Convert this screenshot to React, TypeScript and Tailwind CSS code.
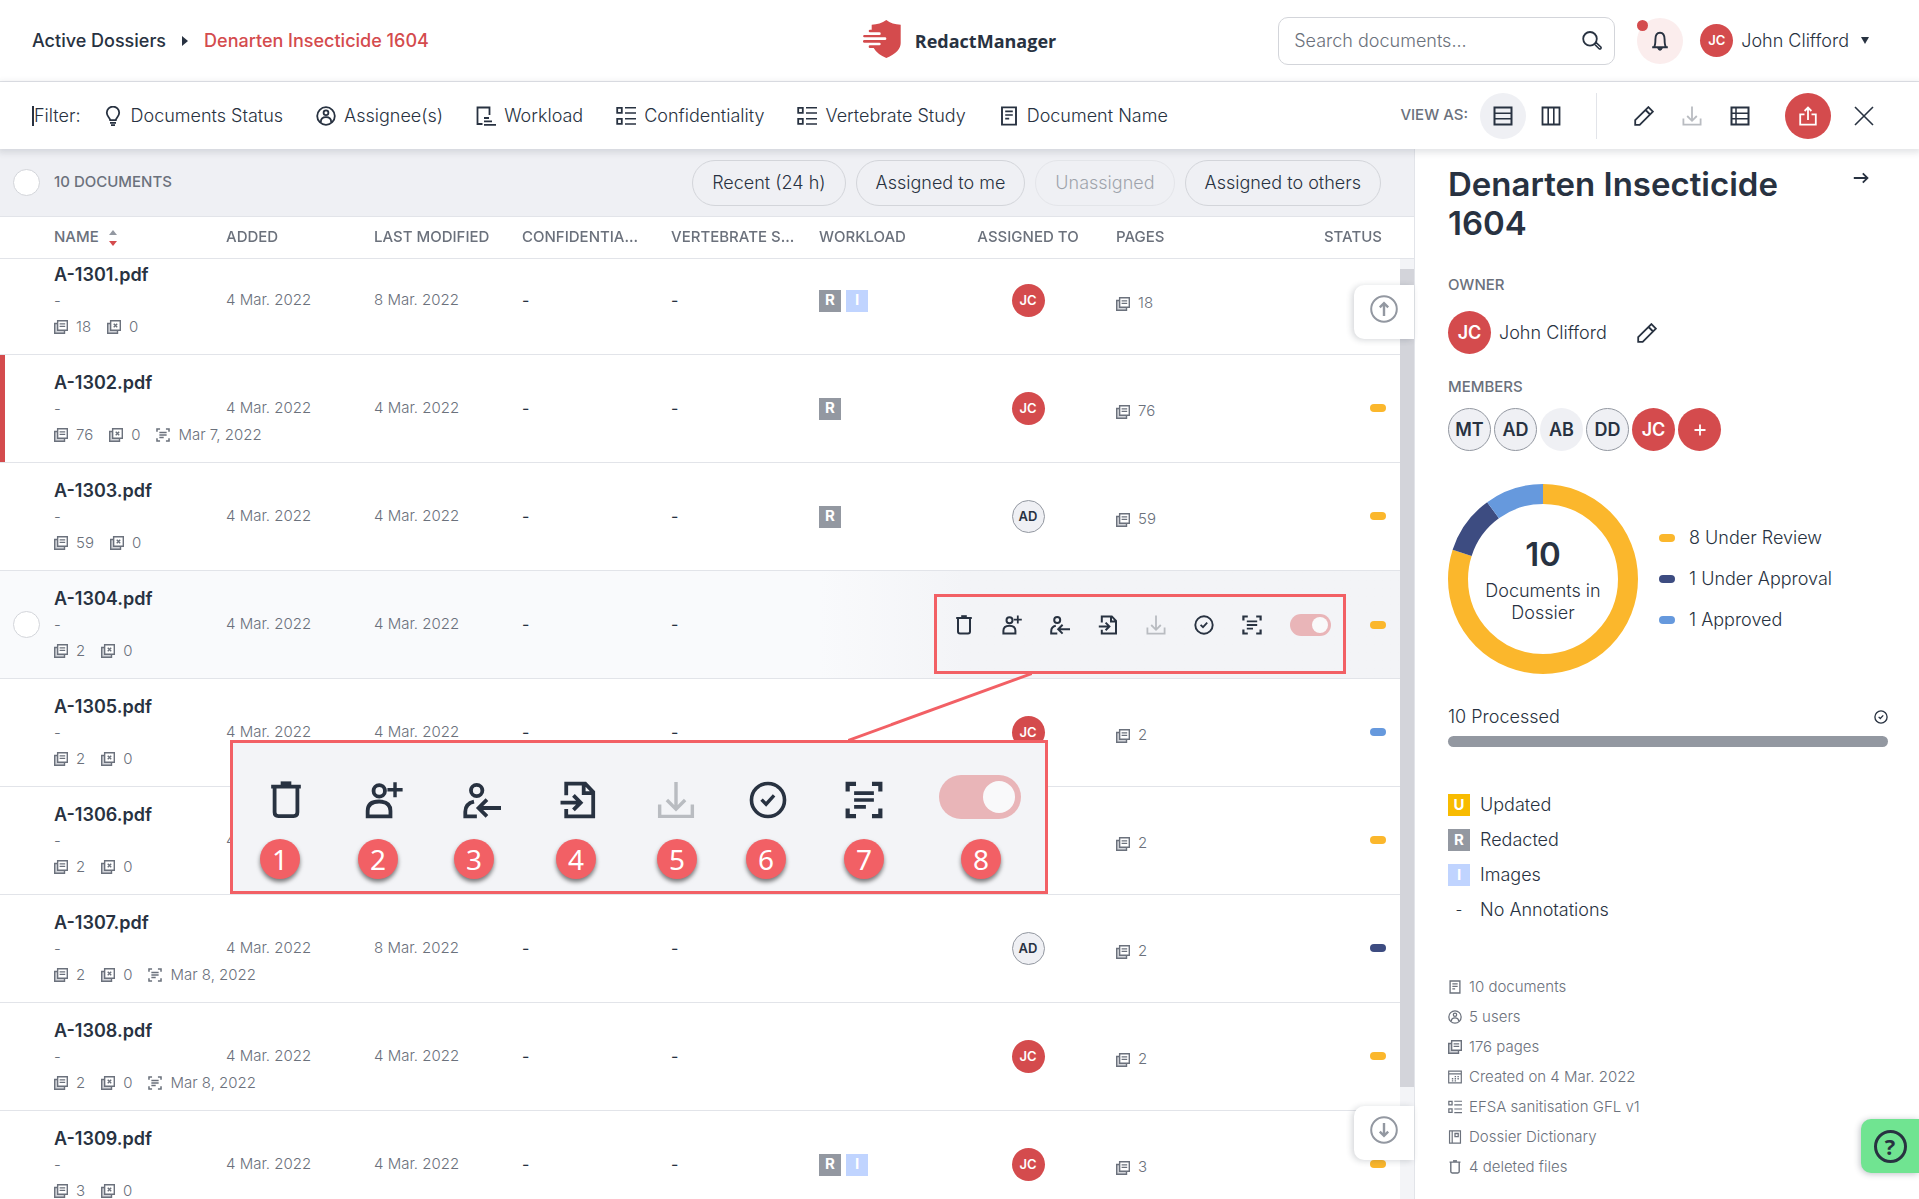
import { useLayoutEffect, useRef } from "react";
import type { ReactNode } from "react";
import { clsx } from "clsx";

type IconProps = { className?: string };

const Svg = ({ className, children }: { className?: string; children: ReactNode }) => (
  <svg
    viewBox="0 0 20 20"
    fill="none"
    stroke="currentColor"
    strokeWidth="2"
    aria-hidden="true"
    className={clsx("shrink-0", className ?? "size-5")}
  >
    {children}
  </svg>
);

const TrashIcon = ({ className }: IconProps) => (
  <Svg className={className}>
    <path d="M2.2 3h15.6M4 3v13.5q0 2 2 2h8q2 0 2-2V3" />
    <path d="M7.2 1.4h5.6" strokeWidth="2.4" />
  </Svg>
);

const AssignIcon = ({ className }: IconProps) => (
  <Svg className={className}>
    <circle cx="7.5" cy="5.2" r="3" />
    <path d="M1.4 18.6v-2.8q0-5 6-5t6 5v2.8z" />
    <path d="M15.8.6v8M11.8 4.6h8" strokeWidth="1.8" />
  </Svg>
);

const UnassignIcon = ({ className }: IconProps) => (
  <Svg className={className}>
    <circle cx="7.2" cy="5" r="3" />
    <path d="M7.3 18.6H1.2v-2.4q0-4.4 4.6-5.4M8.5 14.2H20M12.6 9.8l-4.4 4.4 4.4 4.4" />
  </Svg>
);

const ImportIcon = ({ className }: IconProps) => (
  <Svg className={className}>
    <path d="M3.8 7.5V1.4h10l4.2 4.4v12.8H3.8v-3.8M13 1.4v5h5" />
    <path d="M.8 11.4h10M7.6 7.6l3.8 3.8-3.8 3.8" />
  </Svg>
);

const DownloadIcon = ({ className }: IconProps) => (
  <Svg className={className}>
    <path d="M10 .5v14M5.2 10l4.8 4.8 4.8-4.8M1.4 12.4v6.2h17.2v-6.2" strokeWidth="1.8" />
  </Svg>
);

const CheckCircleIcon = ({ className }: IconProps) => (
  <Svg className={className}>
    <circle cx="10" cy="10" r="8.7" strokeWidth="1.9" />
    <path d="M6.6 9.8l2.4 2.4 4.2-4.6" strokeWidth="1.8" />
  </Svg>
);

const ScanIcon = ({ className }: IconProps) => (
  <Svg className={className}>
    <path d="M1.4 5.5v-4h4.4M14.2 1.5h4.4v4M18.6 14.5v4h-4.4M5.8 18.5H1.4v-4" strokeWidth="2.2" />
    <path d="M4.8 6.4h10.4M4.8 10h10.4M4.8 13.6h6.2" strokeWidth="1.9" />
  </Svg>
);

const BulbIcon = ({ className }: IconProps) => (
  <Svg className={className}>
    <path
      d="M7.2 14.2C7.2 12 3.8 10.4 3.8 6.8a6.2 6.2 0 0 1 12.4 0c0 3.6-3.4 5.2-3.4 7.4zM7 16.8h6M8 19.2h4"
      strokeWidth="1.8"
    />
  </Svg>
);

const UserCircleIcon = ({ className }: IconProps) => (
  <Svg className={className}>
    <circle cx="10" cy="10" r="8.8" strokeWidth="1.8" />
    <circle cx="10" cy="6.8" r="2.4" strokeWidth="1.8" />
    <path d="M4.8 16.2q0-5 5.2-5t5.2 5" strokeWidth="1.8" />
  </Svg>
);

const WorkloadIcon = ({ className }: IconProps) => (
  <Svg className={className}>
    <path d="M6.5 18H1.5V1.5h12V9M8 12h5M8 15.4h8M8 18.8h12" strokeWidth="1.8" />
  </Svg>
);

const ListIcon = ({ className }: IconProps) => (
  <Svg className={className}>
    <path d="M1.2 1.8h4.6v5H1.2zM1.2 12.8h4.6v5H1.2z" strokeWidth="1.8" />
    <path d="M9 1.8h11M9 7h11M9 12.8h11M9 18h11" strokeWidth="1.6" />
  </Svg>
);

const DocIcon = ({ className }: IconProps) => (
  <Svg className={className}>
    <path d="M3 1.4h14v17.2H3z" strokeWidth="1.9" />
    <path d="M6.2 5.4h7.6M6.2 9h7.6M6.2 12.6h4" strokeWidth="1.7" />
  </Svg>
);

const RowsIcon = ({ className }: IconProps) => (
  <Svg className={className}>
    <path d="M1.5 1.5h17v17h-17z" />
    <path d="M2 7.2h16M2 12.8h16" strokeWidth="1.5" />
  </Svg>
);

const ColumnsIcon = ({ className }: IconProps) => (
  <Svg className={className}>
    <path d="M1.5 1.5h17v17h-17z" strokeWidth="1.8" />
    <path d="M7.2 2v16M12.8 2v16" strokeWidth="1.6" />
  </Svg>
);

const ReportIcon = ({ className }: IconProps) => (
  <Svg className={className}>
    <path d="M1.5 1.5h17v17h-17z" />
    <path d="M6 2v16M2 7.2h16M2 12.8h16" strokeWidth="1.5" />
  </Svg>
);

const PencilIcon = ({ className }: IconProps) => (
  <Svg className={className}>
    <path d="M1.2 18.8v-4.6L14.4 1.1l4.5 4.5L5.7 18.8zM11.6 4l4.5 4.5" strokeWidth="1.8" />
  </Svg>
);

const ShareIcon = ({ className }: IconProps) => (
  <Svg className={className}>
    <path d="M6.5 8.3H2.2v10.4h15.6V8.3h-4.3M10 14V1.6M6.6 5L10 1.6 13.4 5" strokeWidth="1.8" />
  </Svg>
);

const CloseIcon = ({ className }: IconProps) => (
  <Svg className={className}>
    <path d="M1 1l18 18M19 1L1 19" strokeWidth="1.6" />
  </Svg>
);

const SearchIcon = ({ className }: IconProps) => (
  <Svg className={className}>
    <circle cx="8" cy="7.8" r="6.8" strokeWidth="1.8" />
    <path d="M12.6 13.2l1.6-1.6 4.6 4.4q.6.8-.1 1.6-.8.8-1.6.1z" strokeWidth="1.6" />
  </Svg>
);

const BellIcon = ({ className }: IconProps) => (
  <Svg className={className}>
    <path d="M2.2 16.2h15.6M4.2 16q1.2-2 1.2-7.4 0-6.8 4.6-6.8t4.6 6.8q0 5.4 1.2 7.4" strokeWidth="1.9" />
    <path d="M7.8 17.2q.4 2 2.2 2t2.2-2z" fill="currentColor" strokeWidth="1" />
  </Svg>
);

const PagesIcon = ({ className }: IconProps) => (
  <Svg className={className}>
    <path d="M1 5h14v14H1z" fill="#d3d5da" />
    <path d="M5.2 1H19v13.6H5.2z" fill="#fff" />
    <path d="M8 5.4h8M8 9.2h8" strokeWidth="1.7" />
  </Svg>
);

const ExcludedIcon = ({ className }: IconProps) => (
  <Svg className={className}>
    <path d="M1 5h14v14H1z" fill="#d3d5da" />
    <path d="M5.2 1H19v13.6H5.2z" fill="#fff" />
    <path d="M9.6 5.4l5 5M14.6 5.4l-5 5" />
  </Svg>
);

const CalendarIcon = ({ className }: IconProps) => (
  <Svg className={className}>
    <path d="M1 1.5h18v17H1zM1 5.5h18" strokeWidth="1.7" />
    <path d="M9.5 9.5h2M13.5 9.5h2M5.5 12.5h2M9.5 12.5h2M13.5 12.5h2M5.5 15.5h2M9.5 15.5h2" strokeWidth="1.8" />
  </Svg>
);

const BookIcon = ({ className }: IconProps) => (
  <Svg className={className}>
    <path d="M2.2 1.2h15.6v17.6H2.2zM6 1.5v17" strokeWidth="1.7" />
    <path d="M10 5h4.6v4.6H10z" strokeWidth="1.8" />
  </Svg>
);

const ArrowRightIcon = ({ className }: IconProps) => (
  <Svg className={className}>
    <path d="M2 10h15M12 4.8l5.2 5.2-5.2 5.2" />
  </Svg>
);

const ScrollArrowIcon = ({ down }: { down?: boolean }) => (
  <svg
    viewBox="0 0 28 28"
    fill="none"
    stroke="currentColor"
    strokeWidth="2"
    aria-hidden="true"
    className={clsx("size-7", down && "rotate-180")}
  >
    <circle cx="14" cy="14" r="12.8" />
    <path d="M14 21V8.5M9.8 12.4L14 8.2l4.2 4.2" strokeWidth="2.4" />
  </svg>
);

const Logo = () => (
  <svg viewBox="0 0 38 38" aria-hidden="true" className="size-[38px] shrink-0">
    <path
      d="M23.3 0Q29 4.5 37.7 4.7V23Q37.7 32 23.3 38 14 34 10.7 28H7a1.35 1.35 0 0 1 0-2.7H16.4a1.3 1.3 0 0 0 0-2.6H1.3a1.35 1.35 0 0 1 0-2.7H22a1.35 1.35 0 0 0 0-2.7H1.3a1.15 1.15 0 0 1 0-2.3H16.4a1.35 1.35 0 0 0 0-2.7H7a1.3 1.3 0 0 1 0-2.6H8.7V4.7Q17 4.5 23.3 0z"
      fill="#d44b4d"
    />
  </svg>
);

const FILTERS = [
  { label: "Documents Status", icon: BulbIcon },
  { label: "Assignee(s)", icon: UserCircleIcon },
  { label: "Workload", icon: WorkloadIcon },
  { label: "Confidentiality", icon: ListIcon },
  { label: "Vertebrate Study", icon: ListIcon },
  { label: "Document Name", icon: DocIcon },
];

const QUICK_FILTERS = [
  { label: "Recent (24 h)" },
  { label: "Assigned to me" },
  { label: "Unassigned", disabled: true },
  { label: "Assigned to others" },
];

type Status = "review" | "approval" | "approved";

type Doc = {
  name: string;
  pages: number;
  modified: string;
  workload: string[];
  assignee: string;
  status: Status;
  ocr?: string;
  active?: boolean;
  hovered?: boolean;
};

const DOCS: Doc[] = [
  { name: "A-1301.pdf", pages: 18, modified: "8 Mar. 2022", workload: ["R", "I"], assignee: "JC", status: "review" },
  { name: "A-1302.pdf", pages: 76, modified: "4 Mar. 2022", workload: ["R"], assignee: "JC", status: "review", ocr: "Mar 7, 2022", active: true },
  { name: "A-1303.pdf", pages: 59, modified: "4 Mar. 2022", workload: ["R"], assignee: "AD", status: "review" },
  { name: "A-1304.pdf", pages: 2, modified: "4 Mar. 2022", workload: [], assignee: "JC", status: "review", hovered: true },
  { name: "A-1305.pdf", pages: 2, modified: "4 Mar. 2022", workload: [], assignee: "JC", status: "approved" },
  { name: "A-1306.pdf", pages: 2, modified: "4 Mar. 2022", workload: [], assignee: "JC", status: "review" },
  { name: "A-1307.pdf", pages: 2, modified: "8 Mar. 2022", workload: [], assignee: "AD", status: "approval", ocr: "Mar 8, 2022" },
  { name: "A-1308.pdf", pages: 2, modified: "4 Mar. 2022", workload: [], assignee: "JC", status: "review", ocr: "Mar 8, 2022" },
  { name: "A-1309.pdf", pages: 3, modified: "4 Mar. 2022", workload: ["R", "I"], assignee: "JC", status: "review" },
];

const STATUS_COLORS: Record<Status, string> = {
  review: "bg-[#fbb72c]",
  approval: "bg-[#3d4c81]",
  approved: "bg-[#6699dd]",
};

const TAG_COLORS: Record<string, string> = {
  U: "bg-[#f8bb00]",
  R: "bg-[#9398a1]",
  I: "bg-[#c0d4ff]",
};

const ROW_ACTIONS = [
  { label: "Delete document", icon: TrashIcon },
  { label: "Assign reviewer", icon: AssignIcon },
  { label: "Unassign", icon: UnassignIcon },
  { label: "Import redactions", icon: ImportIcon },
  { label: "Download", icon: DownloadIcon, disabled: true },
  { label: "Approve", icon: CheckCircleIcon },
  { label: "Run OCR", icon: ScanIcon },
];

// Horizontal centres inside the callout, icon and badge
const CALLOUT_PINS = [
  { icon: TrashIcon, x: 53, badge: 47 },
  { icon: AssignIcon, x: 151, badge: 145 },
  { icon: UnassignIcon, x: 249, badge: 241 },
  { icon: ImportIcon, x: 345, badge: 343 },
  { icon: DownloadIcon, x: 443, badge: 444, disabled: true },
  { icon: CheckCircleIcon, x: 535, badge: 533 },
  { icon: ScanIcon, x: 631, badge: 631 },
  { icon: null, x: 747, badge: 748 },
];

const LEGEND: { status: Status; label: string }[] = [
  { status: "review", label: "8 Under Review" },
  { status: "approval", label: "1 Under Approval" },
  { status: "approved", label: "1 Approved" },
];

const ANNOTATIONS = [
  { tag: "U", label: "Updated" },
  { tag: "R", label: "Redacted" },
  { tag: "I", label: "Images" },
  { tag: "-", label: "No Annotations" },
];

const DETAILS = [
  { label: "10 documents", icon: DocIcon },
  { label: "5 users", icon: UserCircleIcon },
  { label: "176 pages", icon: PagesIcon },
  { label: "Created on 4 Mar. 2022", icon: CalendarIcon },
  { label: "EFSA sanitisation GFL v1", icon: ListIcon },
  { label: "Dossier Dictionary", icon: BookIcon },
  { label: "4 deleted files", icon: TrashIcon },
];

const Avatar = ({ initials, large, plain }: { initials: string; large?: boolean; plain?: boolean }) => (
  <span
    className={clsx(
      "inline-flex shrink-0 items-center justify-center rounded-full font-semibold",
      large ? "size-[43px] text-lg" : "size-[33px] text-[13px]",
      initials === "JC" ? "bg-[#d44b4d] text-white" : "bg-[#eff0f4]",
      initials !== "JC" && !plain && "border border-[#9398a1]"
    )}
  >
    {initials}
  </span>
);

const Tag = ({ tag }: { tag: string }) => (
  <span
    className={clsx(
      "flex size-[22px] items-center justify-center text-[15px]",
      TAG_COLORS[tag] && "font-bold text-white",
      TAG_COLORS[tag]
    )}
  >
    {tag}
  </span>
);

const StatusPill = ({ status }: { status: Status }) => (
  <span className={clsx("inline-block h-2 w-4 shrink-0 rounded", STATUS_COLORS[status])} />
);

const IconButton = ({ label, className, children }: { label: string; className?: string; children: ReactNode }) => (
  <button
    type="button"
    aria-label={label}
    className={clsx("relative flex size-[46px] shrink-0 items-center justify-center rounded-full", className)}
  >
    {children}
  </button>
);

const Header = () => (
  <header className="grid h-[82px] shrink-0 grid-cols-[1fr_auto_1fr] items-center border-b border-[#e2e4e9] px-8">
    <nav className="flex items-center gap-4 text-lg font-medium">
      <a href="#dossiers">Active Dossiers</a>
      <svg viewBox="0 0 6 10" className="h-[10px] w-[6px]" fill="currentColor" aria-hidden="true">
        <path d="M0 0l6 5-6 5z" />
      </svg>
      <a href="#dossier" className="text-[#d44b4d]">Denarten Insecticide 1604</a>
    </nav>
    <div className="flex items-start gap-[14px]">
      <Logo />
      <span className="font-['Open_Sans',sans-serif] text-lg leading-[42px] font-bold">RedactManager</span>
    </div>
    <div className="flex items-center justify-end">
      <div className="flex h-12 w-[337px] items-center rounded-[10px] border border-[#d3d5da] pr-3 pl-[15px]">
        <input
          type="text"
          aria-label="Search documents"
          placeholder="Search documents..."
          className="min-w-0 flex-1 text-lg font-light outline-none placeholder:text-[#6b717c]"
        />
        <SearchIcon />
      </div>
      <IconButton label="Notifications" className="mr-[17px] ml-[22px] bg-[#fbeded]">
        <BellIcon />
        <span className="absolute top-0.5 left-0 size-[11px] rounded-full bg-[#d44b4d]" />
      </IconButton>
      <button type="button" className="flex items-center gap-2 text-lg font-light">
        <Avatar initials="JC" />
        John Clifford
        <svg viewBox="0 0 8 7" className="mr-[18px] ml-1 h-[7px] w-2" fill="currentColor" aria-hidden="true">
          <path d="M0 0h8l-4 7z" />
        </svg>
      </button>
    </div>
  </header>
);

const FilterBar = () => (
  <div className="relative z-10 flex h-[67px] shrink-0 items-center justify-between bg-white px-8 shadow-[0_2px_6px_2px_rgba(40,50,65,0.12)]">
    <div className="flex items-center text-lg font-light">
      <span className="mr-[22px] border-l-2 border-[#283241] leading-5">Filter:</span>
      <div className="flex items-center gap-[33px]">
        {FILTERS.map((filter) => (
          <button key={filter.label} type="button" className="flex items-center gap-2">
            <filter.icon />
            {filter.label}
          </button>
        ))}
      </div>
    </div>
    <div className="flex items-center">
      <span className="mr-3 text-[15px] font-medium text-[#6b717c]">VIEW AS:</span>
      <IconButton label="List view" className="mr-0.5 bg-[#eff0f4]"><RowsIcon /></IconButton>
      <IconButton label="Board view"><ColumnsIcon /></IconButton>
      <span className="mr-6 ml-[22px] h-[46px] w-px bg-[#e2e4e9]" />
      <IconButton label="Edit dossier" className="mr-0.5"><PencilIcon /></IconButton>
      <IconButton label="Download dossier" className="mr-0.5 text-[#b9bcc1]"><DownloadIcon /></IconButton>
      <IconButton label="Dossier report" className="mr-[22px]"><ReportIcon /></IconButton>
      <IconButton label="Share" className="mr-[10px] bg-[#d44b4d] text-white"><ShareIcon /></IconButton>
      <IconButton label="Close"><CloseIcon /></IconButton>
    </div>
  </div>
);

const ListHeader = () => (
  <div className="flex h-[68px] shrink-0 items-center justify-between border-b border-[#e2e4e9] bg-[#eff0f4] pr-[33px] pl-[13px]">
    <label className="flex items-center gap-[14px] text-[15px] font-medium text-[#6b717c]">
      <input type="checkbox" className="size-[27px] appearance-none rounded-full border border-[#d3d5da] bg-white" />
      10 DOCUMENTS
    </label>
    <div className="flex gap-[10px]">
      {QUICK_FILTERS.map((filter) => (
        <button
          key={filter.label}
          type="button"
          disabled={filter.disabled}
          className="h-[46px] rounded-full border border-[#d3d5da] px-[19px] text-lg font-light disabled:opacity-40"
        >
          {filter.label}
        </button>
      ))}
    </div>
  </div>
);

const DocRow = ({ doc }: { doc: Doc }) => (
  <tr
    className={clsx(
      "h-[108px] *:border-b *:border-[#e2e4e9]",
      doc.hovered && "bg-[#f9fafc]",
      doc.active && "*:first:shadow-[inset_5px_0_0_#d44b4d]"
    )}
  >
    <td>
      <div className="flex items-center">
        <div className="w-[54px] shrink-0 pl-[13px]">
          {doc.hovered && (
            <input
              type="checkbox"
              aria-label={`Select ${doc.name}`}
              className="block size-[27px] appearance-none rounded-full border border-[#d3d5da] bg-white"
            />
          )}
        </div>
        <div className="text-[15px] leading-[26px] font-light whitespace-nowrap text-[#6b717c]">
          <div className="text-lg leading-[26px] font-semibold text-[#283241]">{doc.name}</div>
          <div>-</div>
          <div className="flex items-center">
            <PagesIcon className="size-[14px]" />
            <span className="mr-4 ml-2">{doc.pages}</span>
            <ExcludedIcon className="size-[14px]" />
            <span className="mr-4 ml-2">0</span>
            {doc.ocr && (
              <>
                <ScanIcon className="size-[14px]" />
                <span className="ml-2">{doc.ocr}</span>
              </>
            )}
          </div>
        </div>
      </div>
    </td>
    <td className="text-[15px] font-light text-[#6b717c]">4 Mar. 2022</td>
    <td className="text-[15px] font-light text-[#6b717c]">{doc.modified}</td>
    <td className="pb-0.5">-</td>
    <td className="pb-0.5">-</td>
    {doc.hovered ? (
      <td colSpan={4} className="bg-linear-to-r from-[#f9fafc] to-[#f3f4f7] to-25% pr-[14px]">
        <div className="flex items-center justify-end">
          <div className="flex items-center gap-7">
            {ROW_ACTIONS.map((action) => (
              <button
                key={action.label}
                type="button"
                aria-label={action.label}
                disabled={action.disabled}
                className="disabled:text-[#b9bcc1]"
              >
                <action.icon />
              </button>
            ))}
            <button
              type="button"
              role="switch"
              aria-checked="true"
              aria-label="Analysis"
              className="flex h-[22px] w-[41px] items-center justify-end rounded-full bg-[#e9b5b8] px-[3px]"
            >
              <span className="size-4 rounded-full bg-[#f9f9fa]" />
            </button>
          </div>
          <span className="ml-[39px] flex"><StatusPill status={doc.status} /></span>
        </div>
      </td>
    ) : (
      <>
        <td>
          <div className="flex gap-[5px]">
            {doc.workload.map((tag) => (
              <Tag key={tag} tag={tag} />
            ))}
          </div>
        </td>
        <td>
          <div className="flex justify-center">
            <Avatar initials={doc.assignee} />
          </div>
        </td>
        <td className="pt-1.5 pl-[27px]">
          <div className="flex items-center gap-2 text-[15px] font-light text-[#6b717c]">
            <PagesIcon className="size-[14px]" />
            {doc.pages}
          </div>
        </td>
        <td className="pr-[14px] pb-0.5">
          <div className="flex justify-end">
            <StatusPill status={doc.status} />
          </div>
        </td>
      </>
    )}
  </tr>
);

const DocTable = () => {
  const scroller = useRef<HTMLDivElement>(null);

  useLayoutEffect(() => {
    if (scroller.current) scroller.current.scrollTop = 12;
  }, []);

  return (
    <div className="flex min-h-0 flex-1">
      <div ref={scroller} className="min-w-0 flex-1 overflow-y-auto [scrollbar-width:none]">
        <table className="w-full table-fixed border-separate border-spacing-0 text-left">
          <colgroup>
            <col className="w-[226px]" />
            <col className="w-[148px]" />
            <col className="w-[148px]" />
            <col className="w-[149px]" />
            <col className="w-[148px]" />
            <col className="w-[148px]" />
            <col className="w-[122px]" />
            <col />
            <col className="w-[80px]" />
          </colgroup>
          <thead className="sticky top-0 z-10 bg-white text-[15px] text-[#6b717c]">
            <tr className="h-[42px] *:border-b *:border-[#e2e4e9] *:font-medium *:whitespace-nowrap">
              <th className="pl-[54px]">
                <button type="button" className="flex items-center gap-[10px]">
                  NAME
                  <svg viewBox="0 0 8 16" className="h-4 w-2" aria-hidden="true">
                    <path d="M0 5l4-5 4 5z" fill="#9398a1" />
                    <path d="M0 11h8l-4 5z" fill="#d44b4d" />
                  </svg>
                </button>
              </th>
              <th>ADDED</th>
              <th>LAST MODIFIED</th>
              <th>CONFIDENTIA...</th>
              <th>VERTEBRATE S...</th>
              <th>WORKLOAD</th>
              <th className="text-center">ASSIGNED TO</th>
              <th className="pl-[27px]">PAGES</th>
              <th className="pr-[18px] text-right">STATUS</th>
            </tr>
          </thead>
          <tbody>
            {DOCS.map((doc) => (
              <DocRow key={doc.name} doc={doc} />
            ))}
          </tbody>
        </table>
      </div>
      <div className="flex w-[14px] shrink-0 flex-col">
        <div className="h-[42px] shrink-0 border-b border-[#e2e4e9]" />
        <div className="flex-1 bg-[#f3f4f7] pt-[10px]">
          <div className="h-[88%] bg-[#d3d4da]" />
        </div>
      </div>
    </div>
  );
};

const ScrollButton = ({ down }: { down?: boolean }) => (
  <button
    type="button"
    aria-label={down ? "Scroll to bottom" : "Scroll to top"}
    className={clsx(
      "absolute right-0 z-10 flex h-[54px] w-[60px] items-center justify-center rounded-l-[10px] bg-white pb-1.5 text-[#9398a1] shadow-[-2px_1px_6px_rgba(40,50,65,0.2)]",
      down ? "bottom-[39px]" : "top-[136px]"
    )}
  >
    <ScrollArrowIcon down={down} />
  </button>
);

const Callout = () => (
  <div className="pointer-events-none absolute inset-0 z-20 overflow-hidden">
    <div className="absolute top-[445px] left-[934px] h-[80px] w-[412px] border-[3px] border-[#f26065]" />
    <svg viewBox="0 0 184 68" className="absolute top-[524px] left-[848px] h-[68px] w-[184px]" aria-hidden="true">
      <path d="M0 67.5L184 .5" stroke="#f26065" strokeWidth="3" />
    </svg>
    <div className="absolute top-[591px] left-[230px] h-[154px] w-[818px] border-[3px] border-[#f26065] bg-[#f3f4f7]">
      {CALLOUT_PINS.map((pin, i) => (
        <div key={pin.x}>
          <div
            className={clsx("absolute top-[38px] -translate-x-1/2", pin.disabled && "text-[#b9bcc1]")}
            style={{ left: pin.x }}
          >
            {pin.icon ? (
              <pin.icon className="size-[38px]" />
            ) : (
              <div className="-mt-1.5 flex h-11 w-[82px] items-center justify-end rounded-full bg-[#e9b5b8] px-1.5">
                <div className="size-8 rounded-full bg-[#f9f9fa]" />
              </div>
            )}
          </div>
          <div
            className="absolute top-24 flex size-10 -translate-x-1/2 items-center justify-center rounded-full bg-[#f26065] font-['Noto_Sans',sans-serif] text-[28px] leading-10 text-white shadow-[0_3px_4px_rgba(0,0,0,0.5)]"
            style={{ left: pin.badge }}
          >
            {i + 1}
          </div>
        </div>
      ))}
    </div>
  </div>
);

const Donut = () => (
  <div className="relative flex size-[190px] shrink-0 flex-col items-center justify-center pb-1.5 text-center">
    <svg viewBox="0 0 190 190" className="absolute inset-0 -rotate-90" fill="none" strokeWidth="20" aria-hidden="true">
      <circle cx="95" cy="95" r="85" pathLength="100" stroke="#fbb72c" strokeDasharray="80 20" />
      <circle cx="95" cy="95" r="85" pathLength="100" stroke="#3d4c81" strokeDasharray="10 90" strokeDashoffset="-80" />
      <circle cx="95" cy="95" r="85" pathLength="100" stroke="#6699dd" strokeDasharray="10 90" strokeDashoffset="-90" />
    </svg>
    <span className="text-[33px] leading-[52px] font-semibold">10</span>
    <span className="w-[120px] leading-[22px]">Documents in Dossier</span>
  </div>
);

const SidePanel = () => (
  <aside className="flex w-[505px] shrink-0 flex-col border-l border-[#e2e4e9] pt-4 pr-[31px] pl-[33px] text-lg font-light">
    <div className="flex items-start justify-between">
      <h1 className="w-[360px] text-[33px] leading-[39px] font-semibold">Denarten Insecticide 1604</h1>
      <button type="button" aria-label="Collapse panel" className="mt-1 mr-[18px]">
        <ArrowRightIcon className="size-[18px]" />
      </button>
    </div>

    <h2 className="mt-8 text-[15px] leading-5 font-medium text-[#6b717c]">OWNER</h2>
    <div className="mt-4 flex items-center">
      <Avatar initials="JC" large />
      <span className="ml-2">John Clifford</span>
      <button type="button" aria-label="Edit owner" className="ml-[30px]">
        <PencilIcon />
      </button>
    </div>

    <h2 className="mt-[23px] text-[15px] leading-5 font-medium text-[#6b717c]">MEMBERS</h2>
    <div className="mt-[11px] flex gap-[3px]">
      <Avatar initials="MT" large />
      <Avatar initials="AD" large />
      <Avatar initials="AB" large plain />
      <Avatar initials="DD" large />
      <Avatar initials="JC" large />
      <button type="button" aria-label="Add member" className="flex size-[43px] items-center justify-center rounded-full bg-[#d44b4d] text-white">
        <svg viewBox="0 0 12 12" className="size-3" stroke="currentColor" strokeWidth="1.8" aria-hidden="true">
          <path d="M6 .5v11M.5 6h11" />
        </svg>
      </button>
    </div>

    <div className="mt-[33px] flex items-center gap-[21px]">
      <Donut />
      <ul className="flex flex-col gap-[15px]">
        {LEGEND.map((item) => (
          <li key={item.label} className="flex items-center gap-[14px] leading-[26px]">
            <StatusPill status={item.status} />
            {item.label}
          </li>
        ))}
      </ul>
    </div>

    <div className="mt-[31px] flex items-center justify-between leading-6">
      10 Processed
      <CheckCircleIcon className="size-[14px]" />
    </div>
    <div className="mt-[7px] h-[11px] rounded-full bg-[#9398a1]" />

    <ul className="mt-[47px] flex flex-col gap-[13px]">
      {ANNOTATIONS.map((item) => (
        <li key={item.label} className="flex items-center gap-[10px] leading-[22px]">
          <Tag tag={item.tag} />
          {item.label}
        </li>
      ))}
    </ul>

    <ul className="mt-[51px] text-[15px] leading-[30px] text-[#6b717c]">
      {DETAILS.map((item) => (
        <li key={item.label} className="flex items-center gap-[7px]">
          <item.icon className="size-[14px]" />
          {item.label}
        </li>
      ))}
    </ul>
  </aside>
);

export default function App() {
  return (
    <div className="flex h-screen flex-col overflow-hidden bg-white font-['Inter',sans-serif] text-base text-[#283241]">
      <Header />
      <FilterBar />
      <div className="relative flex min-h-0 flex-1">
        <main className="relative flex min-w-0 flex-1 flex-col">
          <ListHeader />
          <DocTable />
          <ScrollButton />
          <ScrollButton down />
          <Callout />
        </main>
        <SidePanel />
        <button
          type="button"
          aria-label="Help"
          className="absolute right-0 bottom-[26px] flex h-[54px] w-[58px] items-center justify-center rounded-l-[10px] bg-[#70e491] shadow-[-1px_1px_6px_rgba(40,50,65,0.3)]"
        >
          <span className="flex size-[33px] items-center justify-center rounded-full border-[3px] border-[#283241] font-['Open_Sans',sans-serif] text-[22px] leading-none font-bold">
            ?
          </span>
        </button>
      </div>
    </div>
  );
}
